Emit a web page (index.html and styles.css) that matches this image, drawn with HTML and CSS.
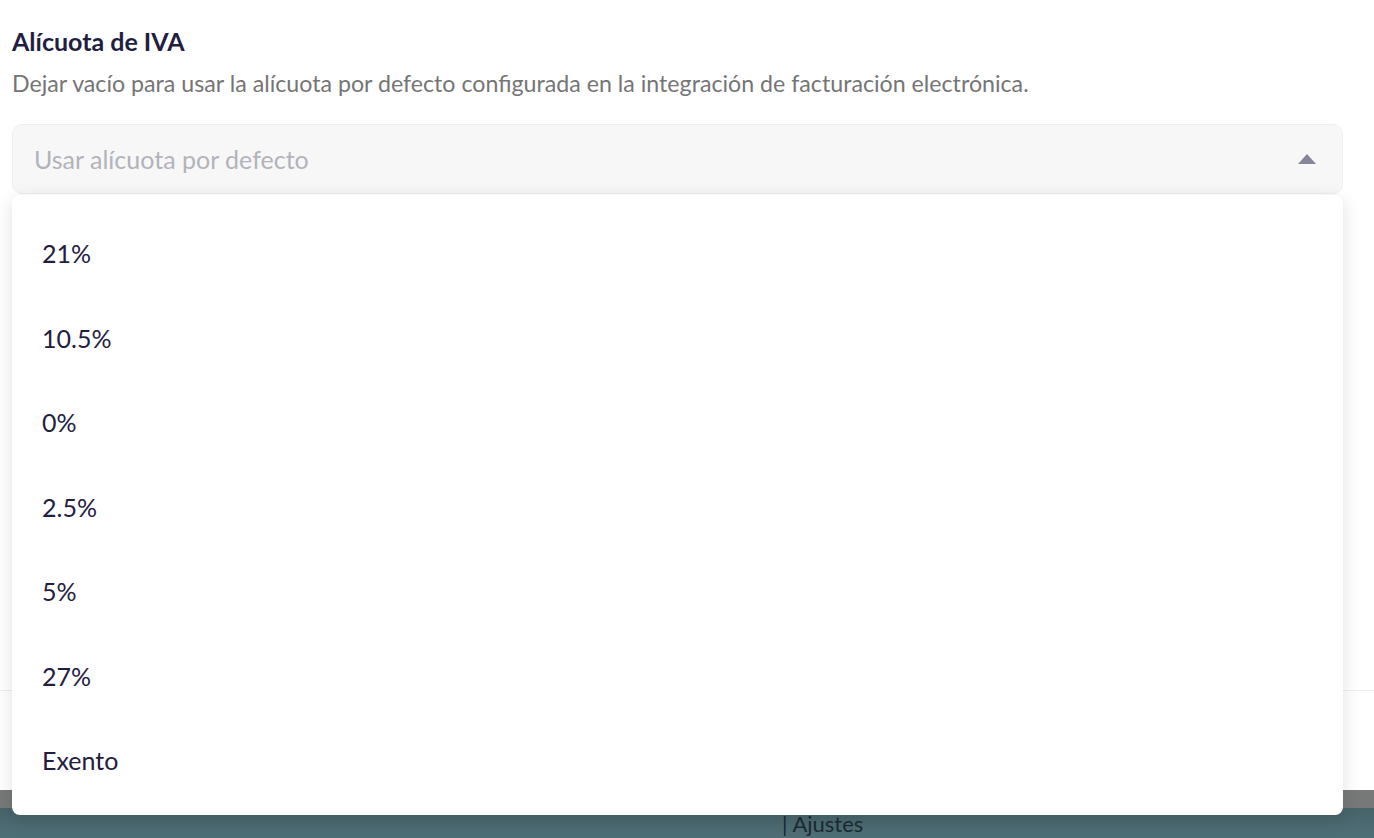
FILE: index.html
```html
<!DOCTYPE html>
<html lang="es">

<head>
  <meta charset="UTF-8" />
  <meta name="viewport" content="width=device-width, initial-scale=1.0">
  <title>Alícuota de IVA</title>
  <link rel="stylesheet" href="styles.css">
</head>

<body>
  <div class="modal">
    <div class="modal-body">
      <div class="field">
        <h3 class="field-label">Alícuota de IVA</h3>
        <p class="field-hint">Dejar vacío para usar la alícuota por defecto configurada en la integración de facturación electrónica.</p>

        <div class="select open">
          <div class="select-control">
            <span class="select-placeholder">Usar alícuota por defecto</span>
            <span class="select-caret"></span>
          </div>

          <ul class="select-menu">
            <li>21%</li>
            <li>10.5%</li>
            <li>0%</li>
            <li>2.5%</li>
            <li>5%</li>
            <li>27%</li>
            <li>Exento</li>
          </ul>
        </div>
      </div>

      <!-- input hidden behind the open menu -->
      <div class="field under">
        <input class="text-input focused" type="text" />
      </div>
    </div>

    <div class="modal-footer"></div>
  </div>

  <div class="backdrop">
    <div class="backdrop-strip"></div>
    <div class="backdrop-page">
      <span class="backdrop-text">| Ajustes</span>
    </div>
  </div>
</body>

</html>
```

FILE: styles.css
```css
* {
  box-sizing: border-box;
  margin: 0;
  padding: 0;
}

body {
  font-family: 'Lato', 'Open Sans', sans-serif;
  background: #fff;
  color: #1f2041;
  height: 838px;
  overflow: hidden;
}

.modal {
  background: #fff;
  height: 790px;
  display: flex;
  flex-direction: column;
}

.modal-body {
  flex: 1;
  padding: 26px 31px 0 12px;
  display: flex;
  flex-direction: column;
}

.field-label {
  font-size: 25px;
  font-weight: 700;
  line-height: 30px;
  color: #1f2041;
}

.field-hint {
  font-size: 23.2px;
  line-height: 30px;
  color: #757575;
  margin-top: 12px;
}

.select {
  position: relative;
  margin-top: 26px;
  z-index: 10;
}

.select-control {
  height: 70px;
  background: #f7f7f7;
  border: 1px solid #efefef;
  border-radius: 10px;
  display: flex;
  align-items: center;
  justify-content: space-between;
  padding: 0 26px 0 21px;
}

.select-placeholder {
  font-size: 25px;
  color: #b3b3bb;
}

.select-caret {
  width: 0;
  height: 0;
  border-left: 9px solid transparent;
  border-right: 9px solid transparent;
  border-bottom: 10px solid #86869a;
}

.select-menu {
  position: absolute;
  top: 71px;
  left: 0;
  right: 0;
  list-style: none;
  background: #fff;
  border-radius: 8px;
  box-shadow: 0 4px 18px rgba(0, 0, 0, 0.12);
  padding: 16px 0 12px;
}

.select-menu li {
  height: 84.5px;
  display: flex;
  align-items: center;
  padding-left: 30px;
  font-size: 25px;
  color: #1f2041;
}

.field.under {
  margin-top: 351px;
}

.text-input {
  display: block;
  width: 100%;
  height: 60px;
  border: 1px solid #e4e4e4;
  border-radius: 8px;
  background: #fff;
}

.text-input.focused {
  border-color: #a9cbe0;
}

.modal-footer {
  height: 100px;
  border-top: 1px solid #ededed;
}

.backdrop {
  height: 48px;
  display: flex;
  flex-direction: column;
}

.backdrop-strip {
  height: 18px;
  background: #777878;
}

.backdrop-page {
  flex: 1;
  background: linear-gradient(180deg, #47636a, #4f6f77);
  padding-left: 782px;
  overflow: hidden;
}

.backdrop-text {
  display: block;
  font-size: 22px;
  line-height: 24px;
  margin-top: 4px;
  color: #1c2a33;
}
```
